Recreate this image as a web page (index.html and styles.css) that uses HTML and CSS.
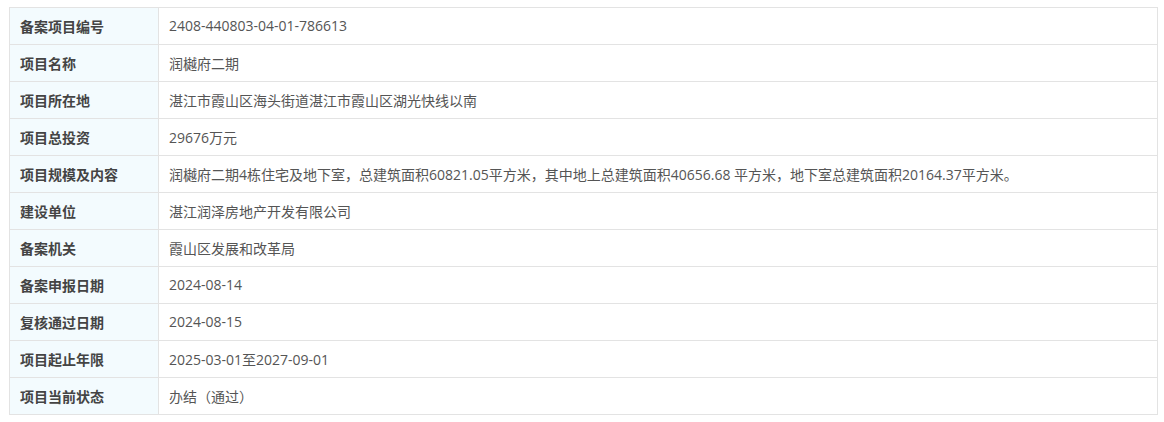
FILE: index.html
```html
<!DOCTYPE html>
<html lang="zh-CN">
  <head>
    <meta charset="utf-8">
    <title>备案项目信息</title>
    <link rel="stylesheet" href="styles.css">
  </head>
  <body>
    <table class="info">
      <tr><th>备案项目编号</th><td>2408-440803-04-01-786613</td></tr>
      <tr><th>项目名称</th><td>润樾府二期</td></tr>
      <tr><th>项目所在地</th><td>湛江市霞山区海头街道湛江市霞山区湖光快线以南</td></tr>
      <tr><th>项目总投资</th><td>29676万元</td></tr>
      <tr><th>项目规模及内容</th><td>润樾府二期4栋住宅及地下室，总建筑面积60821.05平方米，其中地上总建筑面积40656.68 平方米，地下室总建筑面积20164.37平方米。</td></tr>
      <tr><th>建设单位</th><td>湛江润泽房地产开发有限公司</td></tr>
      <tr><th>备案机关</th><td>霞山区发展和改革局</td></tr>
      <tr><th>备案申报日期</th><td>2024-08-14</td></tr>
      <tr><th>复核通过日期</th><td>2024-08-15</td></tr>
      <tr><th>项目起止年限</th><td>2025-03-01至2027-09-01</td></tr>
      <tr><th>项目当前状态</th><td>办结（通过）</td></tr>
    </table>
  </body>
</html>
```

FILE: styles.css
```css
html {
  font-family: "Open Sans", "Noto Sans CJK SC", sans-serif;
}

body {
  margin: 0;
  padding: 7px 0 0 9px;
  background: #fff;
}

.info {
  width: 1149px;
  border-collapse: collapse;
  border: 1px solid #dedede;
  font-size: 14px;
}

.info th,
.info td {
  height: 35px;
  padding: 0 10px 1px 10px;
  border: 1px solid #e3e3e3;
  text-align: left;
  white-space: nowrap;
}

.info th {
  width: 128px;
  background: #f3fbfe;
  color: #444;
  font-weight: bold;
}

.info td {
  color: #555;
}
```
